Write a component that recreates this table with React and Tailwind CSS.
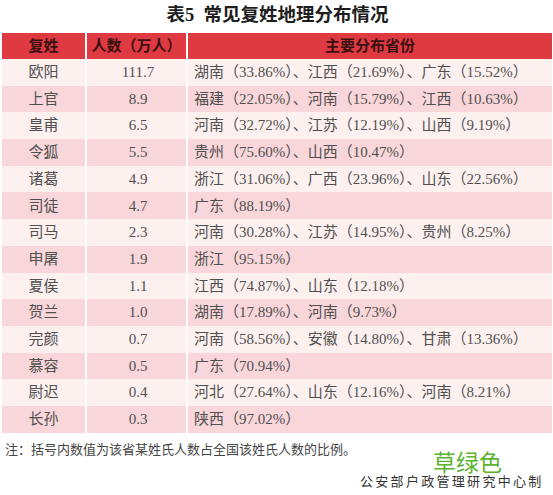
import React from 'react'

// ─── Data ─────────────────────────────────────────────────────────────────────
const ROWS = [
  ['欧阳', '111.7', '湖南（33.86%）、江西（21.69%）、广东（15.52%）'],
  ['上官', '8.9',   '福建（22.05%）、河南（15.79%）、江西（10.63%）'],
  ['皇甫', '6.5',   '河南（32.72%）、江苏（12.19%）、山西（9.19%）'],
  ['令狐', '5.5',   '贵州（75.60%）、山西（10.47%）'],
  ['诸葛', '4.9',   '浙江（31.06%）、广西（23.96%）、山东（22.56%）'],
  ['司徒', '4.7',   '广东（88.19%）'],
  ['司马', '2.3',   '河南（30.28%）、江苏（14.95%）、贵州（8.25%）'],
  ['申屠', '1.9',   '浙江（95.15%）'],
  ['夏侯', '1.1',   '江西（74.87%）、山东（12.18%）'],
  ['贺兰', '1.0',   '湖南（17.89%）、河南（9.73%）'],
  ['完颜', '0.7',   '河南（58.56%）、安徽（14.80%）、甘肃（13.36%）'],
  ['慕容', '0.5',   '广东（70.94%）'],
  ['尉迟', '0.4',   '河北（27.64%）、山东（12.16%）、河南（8.21%）'],
  ['长孙', '0.3',   '陕西（97.02%）'],
]

const SERIF = "font-['Liberation_Serif','Noto_Sans_CJK_SC',serif]"

export default function App() {
  return (
    <div className={`w-[553px] h-[495px] bg-white ${SERIF}`}>
      {/* ── Title ─────────────────────────────────────────────────────────── */}
      <div className="h-[33px] flex items-center justify-center pb-[2px] pl-[2px]">
        <h1 className="text-[18.5px] font-bold text-[#1e1e1e] leading-none">
          表5&nbsp;&nbsp;常见复姓地理分布情况
        </h1>
      </div>

      {/* ── Table ─────────────────────────────────────────────────────────── */}
      <div className="ml-[2px] mr-[1px] grid grid-cols-[83px_99px_1fr] gap-x-[2px]">
        {/* header */}
        <div className="h-[26px] bg-[#df3a41] flex items-center justify-center text-[15px] font-bold text-[#3b1012]">复姓</div>
        <div className="h-[26px] bg-[#df3a41] flex items-center justify-center text-[15px] font-bold text-[#3b1012]">人数（万人）</div>
        <div className="h-[26px] bg-[#df3a41] flex items-center justify-center text-[15px] font-bold text-[#3b1012]">主要分布省份</div>

        {ROWS.map(([name, num, prov], i) => {
          const bg = i % 2 === 0 ? 'bg-[#fdf1f0]' : 'bg-[#f8d6d9]'
          return (
            <React.Fragment key={name}>
              <div className={`h-[26.7px] ${bg} flex items-center justify-center text-[15px] text-[#505050]`}>{name}</div>
              <div className={`h-[26.7px] ${bg} flex items-center justify-center pl-[3px] text-[15px] text-[#505050]`}>{num}</div>
              <div className={`h-[26.7px] ${bg} flex items-center pl-[6px] text-[15px] text-[#505050] whitespace-nowrap`}>{prov}</div>
            </React.Fragment>
          )
        })}
      </div>

      {/* ── Footnote ──────────────────────────────────────────────────────── */}
      <p className="mt-[10px] ml-[5px] text-[13px] leading-none text-[#444]">
        注：括号内数值为该省某姓氏人数占全国该姓氏人数的比例。
      </p>

      <div className="relative h-[40px]">
        <span className="absolute left-[433px] top-[-4px] text-[23px] leading-[18px] text-[#5db32f] font-['Noto_Sans_CJK_SC',sans-serif] z-10">
          草绿色
        </span>
        <span className="absolute left-[360px] top-[19px] text-[13px] leading-none tracking-[2.3px] text-[#333]">
          公安部户政管理研究中心制
        </span>
      </div>
    </div>
  )
}
